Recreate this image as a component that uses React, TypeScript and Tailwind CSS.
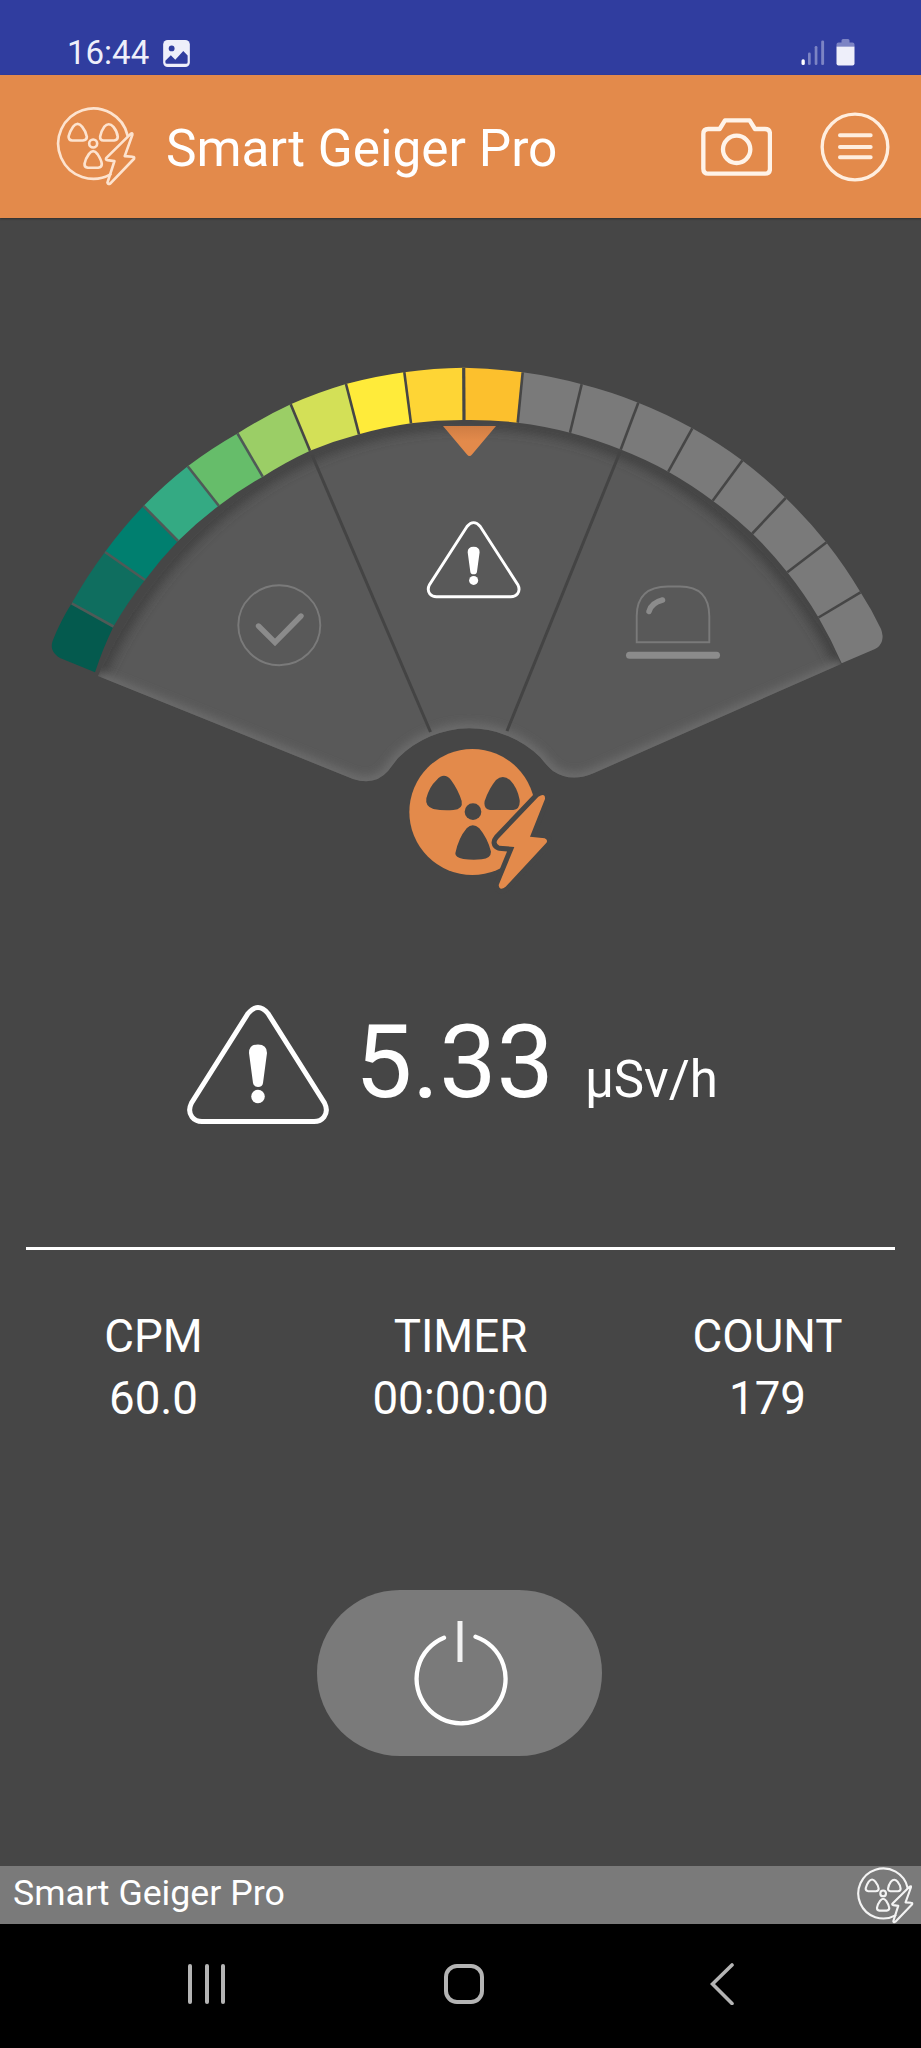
type Boundary = [number, number, number, number];

const bounds: Boundary[] = [
  [71.7, 603.3, 113.5, 626.5],
  [105, 552, 145, 580],
  [143.5, 506, 178, 541],
  [187.7, 466.3, 218.8, 505.7],
  [237.5, 433.5, 262.7, 476.7],
  [290.7, 404.3, 310, 450.7],
  [346, 384, 359, 434.3],
  [404.3, 372.2, 411, 423.3],
  [463.7, 367.7, 464, 420],
  [522.7, 372.3, 517.7, 422.7],
  [581.7, 384.3, 570, 432.7],
  [638.3, 402.7, 620.7, 449.5],
  [692.3, 428.3, 668.3, 471.7],
  [742.3, 460.5, 712.7, 500.7],
  [785.7, 498, 752.3, 533.5],
  [826.3, 542.5, 787.3, 572.3],
  [860.5, 592.3, 818.5, 617.5],
];

const colors = [
  "#0f6e5f", "#007f6f", "#34aa83", "#66bd6a", "#9bce66", "#d3e057", "#ffeb3a", "#fed535",
  "#fcc02d", "#7a7a7a", "#7a7a7a", "#7a7a7a", "#7a7a7a", "#7a7a7a", "#7a7a7a", "#7a7a7a",
];

const panel =
  "M98 676 C150 560 270 424 470 424 C668 424 790 560 841 664 L594 773 Q571 783 553 771 Q548 767 540 757 A101 101 0 0 0 398 758 L388 771 Q375 786 353 779 Z";

function OutlineLogo({ className, stroke, weight }: { className: string; stroke: string; weight: number }) {
  return (
    <svg viewBox="30 30 250 250" className={className} fill="none" stroke={stroke} strokeWidth={weight} strokeLinejoin="round" strokeLinecap="round">
      <path d="M249 123 A106 106 0 1 0 197 239" />
      <circle cx="145" cy="146" r="12" />
      <path d="M84 96 Q98 78 112 96 Q124 111 126 126 Q126 136 114 137 L82 137 Q70 136 71 124 Q74 110 84 96Z" />
      <path d="M178 96 Q192 80 206 96 Q218 111 219 126 Q219 136 208 137 L176 137 Q165 136 166 125 Q168 110 178 96Z" />
      <path d="M132 178 Q145 160 158 178 Q170 196 171 208 Q171 218 160 219 L129 219 Q118 217 119 207 Q121 193 132 178Z" />
      <path d="M258 117 L184 190 Q182 195 188 196 L209 199 L188 264 Q190 271 197 266 L268 192 Q270 186 264 186 L240 184 L263 120 Q264 113 258 117Z" />
    </svg>
  );
}

function WarningShape({ stroke }: { stroke: number }) {
  return (
    <>
      <path
        d="M61 8.5 Q71 -3.5 81 8.5 L137.5 98 Q141.5 106 137 112 Q133.5 116.5 127 116.5 L15 116.5 Q8.5 116.5 5 112 Q0.5 106 4.5 98 Z"
        fill="none"
        stroke="#fff"
        strokeWidth={stroke}
      />
      <path d="M62 48 Q62 39.5 71 39.5 Q80 39.5 80 48 L76 78 Q75.5 82 71 82 Q66.500 82 66 78 Z" fill="#fff" />
      <circle cx="71" cy="91.5" r="6.8" fill="#fff" />
    </>
  );
}

function Gauge() {
  return (
    <svg viewBox="0 218 921 702" className="block h-[702px] w-[921px] shrink-0">
      <defs>
        <clipPath id="panel-clip"><path d={panel} /></clipPath>
        <filter id="soft" x="-10%" y="-10%" width="120%" height="120%"><feGaussianBlur stdDeviation="6" /></filter>
        <filter id="edge" x="-10%" y="-10%" width="120%" height="120%"><feGaussianBlur stdDeviation="4" /></filter>
        <linearGradient id="pointer" x1="0" y1="0" x2="0" y2="1">
          <stop offset="0" stopColor="#cf7d43" />
          <stop offset="0.5" stopColor="#e38a4b" />
        </linearGradient>
      </defs>

      <path d={panel} fill="#595959" />
      <g clipPath="url(#panel-clip)">
        <path d="M98 676 C150 560 270 422 470 422 C668 422 790 560 841 664" fill="none" stroke="#3e3e3e" strokeWidth="12" filter="url(#soft)" />
        <path
          d="M98 678 L353 780 Q375 787 388 772 L398 759 A101 101 0 0 1 540 758 Q548 768 553 772 Q571 784 594 774 L841 666"
          fill="none"
          stroke="#6c6c6c"
          strokeWidth="12"
          filter="url(#edge)"
        />
      </g>
      <path d="M312 455 L430.500 732 M620 452 L507 731" stroke="#444" strokeWidth="3" fill="none" />

      <path d="M71.700 603.300 L113.500 626.500 Q103 648 95 672.300 L60 658 Q48.500 651 53 640 Q60.500 621 71.700 603.300Z" fill="#045a4e" />
      {colors.map((c, i) => {
        const a = bounds[i];
        const b = bounds[i + 1];
        return (
          <path
            key={i}
            d={`M${a[0]} ${a[1]} A451 451 0 0 1 ${b[0]} ${b[1]} L${b[2]} ${b[3]} A404 404 0 0 0 ${a[2]} ${a[3]} Z`}
            fill={c}
          />
        );
      })}
      <path d="M860.500 592.300 Q872 610 881 629 Q886 643 875 649 L841.700 663.300 Q831 639 818.500 617.500Z" fill="#7a7a7a" />
      {bounds.map((b, i) => (
        <line key={i} x1={b[0]} y1={b[1]} x2={b[2]} y2={b[3]} stroke={i < 5 ? "#4f5a57" : "#464646"} strokeWidth={i === 8 ? 3.2 : 2.6} />
      ))}

      <path d="M443 426 H496 L472 454.500 Q469.500 457.500 467 454.500Z" fill="url(#pointer)" />

      <g transform="translate(426.5 521) scale(.664 .65)"><WarningShape stroke={4.4} /></g>

      <ellipse cx="279.300" cy="625.200" rx="41" ry="40" fill="none" stroke="#7a7a7a" strokeWidth="1.900" />
      <path d="M258.500 626 L275 642.500 L301 616" fill="none" stroke="#8b8b8b" strokeWidth="5.400" strokeLinecap="round" />

      <path d="M636.700 642.300 V616 Q637 586.500 668 586.500 H680 Q709 586.500 709.300 616 V642.300Z" fill="none" stroke="#7a7a7a" strokeWidth="1.900" />
      <path d="M649 611.500 Q651 603 662.500 600" fill="none" stroke="#8b8b8b" strokeWidth="5.500" strokeLinecap="round" />
      <path d="M629.500 655.200 H716.500" stroke="#8b8b8b" strokeWidth="7" strokeLinecap="round" />

      <g transform="translate(390 700) scale(.33333)">
        <circle cx="247" cy="336" r="189" fill="#e38a4b" />
        <g fill="#464646">
          <circle cx="249" cy="335" r="25" />
          <path d="M140 240 Q162 215 183 240 Q205 270 215 303 Q220 328 190 330 Q160 333 130 327 Q105 320 109 295 Q118 260 140 240Z" />
          <path d="M318 240 Q338 222 360 240 Q382 262 389 300 Q391 328 370 330 L300 330 Q280 326 284 303 Q297 265 318 240Z" />
          <path d="M230 385 Q248 366 268 385 Q293 415 303 455 Q303 475 275 478 Q248 481 220 477 Q195 472 196 460 Q205 415 230 385Z" />
        </g>
        <path
          d="M445 290 Q466 278 465 297 L420 410 L464 415 Q476 420 468 430 L347 560 Q328 574 326 555 L373 441 L328 437 Q313 430 325 416 Z"
          fill="#e38a4b"
          stroke="#464646"
          strokeWidth="30"
          strokeLinejoin="round"
          paintOrder="stroke"
        />
      </g>
    </svg>
  );
}

function Stat({ label, value }: { label: string; value: string }) {
  return (
    <div className="flex flex-col items-center text-[45.700px] leading-[62px]">
      <div>{label}</div>
      <div>{value}</div>
    </div>
  );
}

export default function App() {
  return (
    <div className="flex h-[2048px] w-[921px] flex-col overflow-hidden bg-[#464646] font-[Roboto,sans-serif] text-white">
      <div className="flex h-[75px] shrink-0 items-center bg-[#303d9f] pl-[67px] pr-[66px] pt-[31px] text-[#eeeffa]">
        <span className="text-[33px] leading-[44px]">16:44</span>
        <svg viewBox="0 0 26.400 26.700" className="ml-[14px] h-[27px] w-[27px]">
          <rect width="26.400" height="26.700" rx="4.500" fill="#eeeffa" />
          <circle cx="8.400" cy="8.300" r="2.900" fill="#303d9f" />
          <path d="M2.200 20.500 L7.600 15 L12 19.500 L19.900 11 L24.200 15.300 V22 Q24.200 23.500 22.700 23.500 H3.700 Q2.200 23.500 2.200 22Z" fill="#303d9f" />
        </svg>
        <svg viewBox="0 0 54 28" className="ml-auto h-[28px] w-[54px]">
          <rect x="0.500" y="20.300" width="3.300" height="5.700" rx="1.500" fill="#fff" />
          <g fill="#7c84c4">
            <rect x="7" y="13.500" width="2.700" height="12.500" rx="1.300" />
            <rect x="13.700" y="7" width="2.700" height="19" rx="1.300" />
            <rect x="20.200" y="1.500" width="2.900" height="24.500" rx="1.300" />
            <path d="M35.500 7.500 V5.500 Q35.500 3.500 37.500 3.500 H40.500 V1.500 Q40.500 0 42 0 H47 Q48.500 0 48.500 1.500 V3.500 H51.500 Q53.500 3.500 53.500 5.500 V7.500Z" />
          </g>
          <path d="M35.500 7.500 H53.500 V24.500 Q53.500 26.500 51.500 26.500 H37.500 Q35.500 26.500 35.500 24.500Z" fill="#eeeffa" />
        </svg>
      </div>

      <header className="flex h-[143px] shrink-0 items-center bg-[#e38a4b] pl-[55px] pr-[31px] shadow-[0_1px_2px_rgba(0,0,0,0.35)]">
        <OutlineLogo className="h-[83px] w-[83px]" stroke="#fde3cf" weight={8} />
        <h1 className="ml-[28px] whitespace-nowrap pt-[5px] text-[51.400px] leading-[60px]">Smart Geiger Pro</h1>
        <svg viewBox="0 0 214 174" className="ml-auto h-[58px] w-[71.300px]" fill="none" stroke="#fff3e8" strokeWidth="13" strokeLinejoin="round">
          <path d="M22 33 H56 L72 7 H146 L162 33 H192 Q207 33 207 48 V152 Q207 167 192 167 H22 Q7 167 7 152 V48 Q7 33 22 33Z" />
          <circle cx="107" cy="94" r="41" />
        </svg>
        <svg viewBox="0 0 210 210" className="ml-[48px] h-[70px] w-[70px]" fill="none" stroke="#ffeedf" strokeLinecap="round">
          <circle cx="105" cy="105" r="98.500" strokeWidth="10" />
          <path d="M60 70 H152 M60 105 H152 M60 136 H152" strokeWidth="12" />
        </svg>
      </header>

      <Gauge />

      <div className="flex h-[327px] shrink-0 items-start pl-[187px] pt-[74px]">
        <svg viewBox="0 0 142 119" className="mt-[11px] h-[119px] w-[142px]"><WarningShape stroke={5} /></svg>
        <div className="flex items-baseline">
          <span className="ml-[26px] text-[102px] leading-[136px]">5.33</span>
          <span className="ml-[31px] text-[51px] leading-[60px]">µSv/h</span>
        </div>
      </div>
      <div className="mx-[26px] h-[3px] shrink-0 bg-white" />

      <div className="grid shrink-0 grid-cols-3 pt-[56px]">
        <Stat label="CPM" value="60.0" />
        <Stat label="TIMER" value="00:00:00" />
        <Stat label="COUNT" value="179" />
      </div>

      <button className="ml-[317px] mt-[160px] flex h-[166px] w-[285px] shrink-0 items-center justify-center rounded-full bg-[#7a7a7a]">
        <svg viewBox="0 0 96 108" className="h-[108px] w-[96px]" fill="none" stroke="#fff">
          <path d="M32 18.700 A44.500 44.500 0 1 0 63.500 17.700" strokeWidth="4.300" strokeLinecap="round" />
          <path d="M48 2 V43" strokeWidth="5" stroke="#f2f2f2" />
        </svg>
      </button>

      <footer className="mt-auto flex h-[58px] shrink-0 items-center justify-between bg-[#7a7a7a] pl-[13px] pr-[6px]">
        <span className="-mt-[5px] text-[35.700px] leading-[44px]">Smart Geiger Pro</span>
        <OutlineLogo className="h-[59px] w-[59px]" stroke="#f4f4f4" weight={9} />
      </footer>

      <nav className="flex h-[124px] shrink-0 items-center bg-black pb-[4px] pl-[188px] pr-[187px]">
        <div className="flex h-[40px] w-[37px] justify-between">
          <span className="w-[4px] rounded-full bg-[#b4b4b4]" />
          <span className="w-[4px] rounded-full bg-[#b4b4b4]" />
          <span className="w-[4px] rounded-full bg-[#b4b4b4]" />
        </div>
        <div className="ml-[219px] h-[40px] w-[40px] rounded-[13px] border-4 border-[#b4b4b4]" />
        <svg viewBox="0 0 24 42" className="ml-auto h-[42px] w-[24px]" fill="none" stroke="#b4b4b4" strokeWidth="3.600" strokeLinecap="round">
          <path d="M22 2 L2.500 21 L22 40.500" />
        </svg>
      </nav>
    </div>
  );
}
